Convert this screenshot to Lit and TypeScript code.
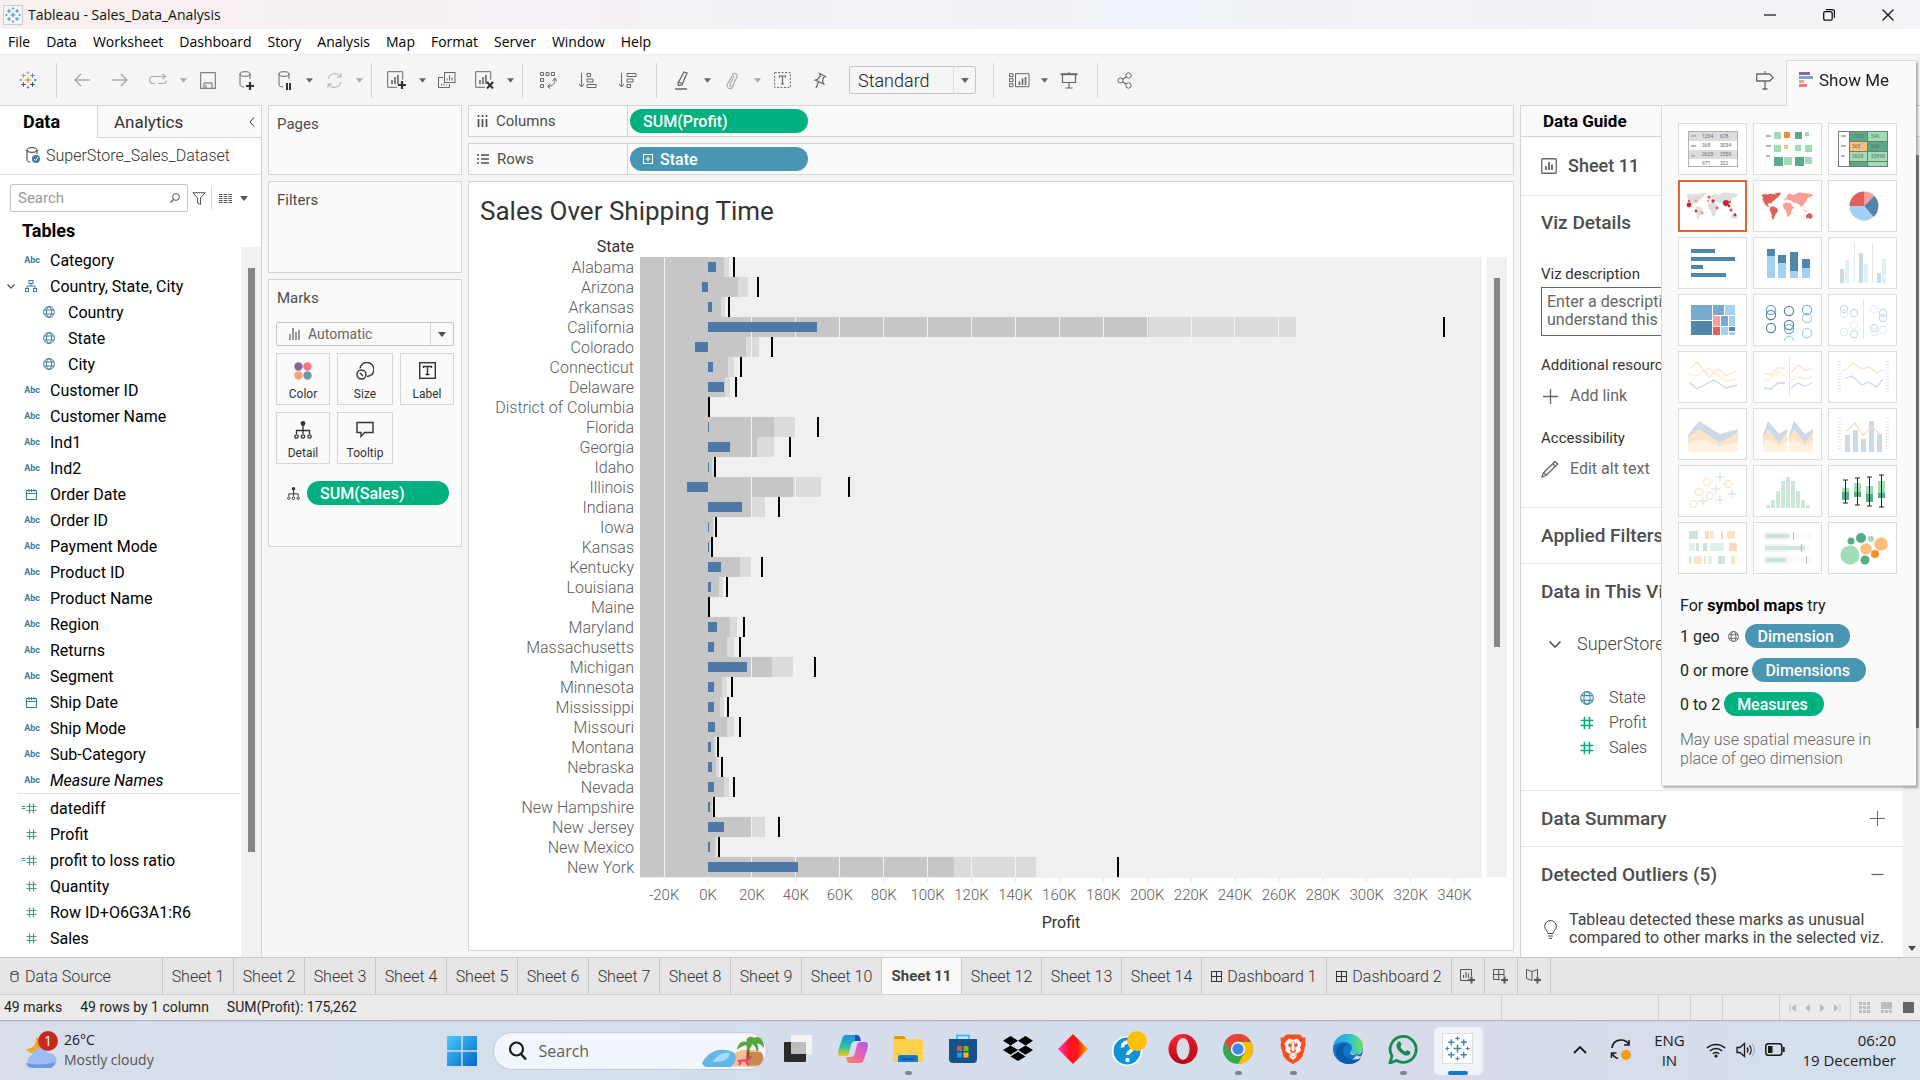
import { LitElement, html, svg, css, nothing } from "lit";
import type { TemplateResult } from "lit";
import { customElement, property } from "lit/decorators.js";
import { classMap } from "lit/directives/class-map.js";

type Svg = TemplateResult | unknown;

const icon = (w: number, h: number, body: Svg, cls = "ic") =>
  html`<svg class=${cls} width=${w} height=${h} viewBox="0 0 ${w} ${h}" fill="none" stroke="currentColor" aria-hidden="true">${body}</svg>`;

/* ---------- shared glyphs ---------- */

const caret = () => icon(8, 5, svg`<path d="M0 0h8l-4 5z" fill="currentColor" stroke="none"/>`);
const globe = (s = 12) =>
  html`<svg class="ic" width=${s} height=${s} viewBox="0 0 12 12" fill="none" stroke="currentColor" aria-hidden="true">
    <circle cx="6" cy="6" r="5.4"/><ellipse cx="6" cy="6" rx="2.6" ry="5.4"/><path d="M1 4h10M1 8h10"/></svg>`;
const hash = (s = 11) =>
  html`<svg class="ic" width=${s} height=${s} viewBox="0 0 11 11" fill="none" stroke="currentColor" stroke-width="1.2" aria-hidden="true">
    <path d="M3.5 0.5v10M7.5 0.5v10M0.5 3.5h10M0.5 7.5h10"/></svg>`;
const calcHash = () => html`<span class="calc">=</span>${hash()}`;
const hierarchy = () =>
  icon(12, 12, svg`<rect x="4" y="0.5" width="4" height="3"/><rect x="0.5" y="8.5" width="3" height="3"/><rect x="8.5" y="8.5" width="3" height="3"/><path d="M6 4v2M2 8V6h8v2"/>`);
const calendar = () => icon(11, 11, svg`<rect x="0.5" y="1.5" width="10" height="9"/><path d="M0.5 4.5h10M3 0v3M5.500 0v3M8 0v3"/>`);
const detailGlyph = (s: number) =>
  html`<svg class="ic" width=${s} height=${s} viewBox="0 0 18 18" fill="none" stroke="currentColor" stroke-width="1.3" aria-hidden="true">
    <circle cx="9" cy="2.500" r="2.400" fill="currentColor" stroke="none"/><path d="M9 4v9M2.500 13V9.500h13V13"/>
    <circle cx="2.500" cy="15.500" r="1.700"/><circle cx="9" cy="15.500" r="1.700"/><circle cx="15.500" cy="15.500" r="1.700"/></svg>`;
const plusBox = () => icon(10, 10, svg`<rect x="0.5" y="0.5" width="9" height="9"/><path d="M5 2.500v5M2.500 5h5"/>`);
const sheetGlyph = () => icon(16, 16, svg`<rect x="0.75" y="0.75" width="14.500" height="14.500" rx="1" stroke-width="1.3"/><path d="M5 12V8M8 12V4M11 12V6.500" stroke-width="1.800"/>`);
const dashGlyph = () => icon(11, 11, svg`<rect x="0.5" y="0.5" width="10" height="10"/><path d="M5.500 0.5v10M0.500 5.500h10"/>`);

const mark = (x: number, y: number, r: number, c: string, w: number) =>
  svg`<path d="M${x - r} ${y}h${2 * r}M${x} ${y - r}v${2 * r}" stroke=${c} stroke-width=${w}/>`;
const tableauMark = (size: number, mono = false) => {
  const c = (v: string) => (mono ? "#3f86b4" : v);
  return html`<svg class="ic" width=${size} height=${size} viewBox="0 0 32 32" aria-hidden="true">
    ${mark(16, 16, 5, c("#e8762c"), 2)}
    ${mark(8, 8, 4, c("#eb9129"), 1.8)}${mark(24, 8, 4, c("#59879b"), 1.8)}
    ${mark(8, 24, 4, c("#c72035"), 1.8)}${mark(24, 24, 4, c("#1f447e"), 1.8)}
    ${mark(16, 3, 2.6, c("#7099a6"), 1.4)}${mark(16, 29, 2.6, c("#5b6591"), 1.4)}
    ${mark(3, 16, 2.6, c("#7099a6"), 1.4)}${mark(29, 16, 2.6, c("#5b6591"), 1.4)}
  </svg>`;
};

/* ---------- toolbar glyphs ---------- */

const bars = svg`<path d="M5 13V9M8 13V6M11 13V4" stroke-width="1.6"/>`;
const T = {
  back: icon(16, 14, svg`<path d="M16 7H1M7 1L1 7l6 6" stroke-width="1.4"/>`),
  fwd: icon(16, 14, svg`<path d="M0 7h15M9 1l6 6-6 6" stroke-width="1.4"/>`),
  redo: icon(18, 12, svg`<path d="M6 9.500H4a3.500 3.500 0 010-7h12.500M13.500 0l3 2.500-3 2.500M9 9.500h5a3.500 3.500 0 003.300-3" stroke-width="1.2"/>`),
  save: icon(16, 17, svg`<rect x="0.700" y="0.700" width="14.600" height="15.600"/><path d="M4 16v-5h8v5M6 16v-3"/>`),
  dbAdd: icon(15, 19, svg`<ellipse cx="6" cy="3" rx="5" ry="2.300"/><path d="M1 3v11c0 1 2 2 4 2M11 3v5"/><path d="M11 11v8M7 15h8" stroke-width="2.200" stroke="#333"/>`),
  dbPause: icon(13, 19, svg`<ellipse cx="6" cy="3" rx="5" ry="2.300"/><path d="M1 3v11c0 1 2 2 4 2M11 3v5"/><path d="M9 12v7M12 12v7" stroke-width="2" stroke="#333"/>`),
  refresh: icon(17, 17, svg`<path d="M2 7a7 7 0 0112.500-2.500M15 10a7 7 0 01-12.500 2.500M15 1v4h-4M2 16v-4h4"/>`),
  newSheet: icon(20, 18, svg`<path d="M10 16.300H0.700V0.700h15v8"/>${bars}<path d="M15 10v8M11 14h8" stroke-width="2.200" stroke="#333"/>`),
  dup: icon(18, 16, svg`<rect x="6.500" y="0.500" width="10.500" height="10"/><path d="M5 5.500H0.500v10h11v-3.500M9 8.500v-2M11.500 8.500v-5M14 8.500v-3M3.500 13.500v-2M6 13.500v-2M8.500 13.500v-1"/>`),
  clear: icon(20, 18, svg`<path d="M10 16.300H0.700V0.700h15v8"/>${bars}<path d="M12 11l6 6.500M18 11l-6 6.500" stroke-width="2" stroke="#333"/>`),
  swap: icon(17, 18, svg`<path d="M0.500 1.500h3v3h-3zM6 1.500h3v3h-3zM11.500 1.500h3v3h-3zM0.500 7.500h3v3h-3zM0.500 13.500h3v3h-3zM15 8c0 5-2 7-7 7.500M12.500 10L15 7l2 3M10.500 12.500L7.500 15.500l3 2.300"/>`),
  asc: icon(18, 17, svg`<path d="M2.500 1v13M0 12l2.500 3L5 12" /><path d="M8 1.500h3.500v3H8zM8 7h6v3H8zM8 12.500h9v3H8z"/>`),
  desc: icon(18, 17, svg`<path d="M2.500 1v13M0 12l2.500 3L5 12" /><path d="M8 1.500h9v3H8zM8 7h6v3H8zM8 12.500h3.500v3H8z"/>`),
  pen: icon(14, 19, svg`<path d="M9 1l3 1-5 12-3.500 0.500L3 12zM4 11l3 1.500M0 18h12" stroke-width="1.3"/>`),
  clip: icon(14, 17, svg`<path d="M9 4L5 12.500a1.500 1.500 0 003 1l4-9a2.300 2.300 0 00-4.500-1.500L2.500 12a3 3 0 005.500 3" stroke-width="1.2"/>`),
  text: icon(17, 16, svg`<rect x="0.600" y="0.600" width="15.800" height="14.800" stroke-dasharray="2 1.500"/><path d="M5.500 5.500V4h6v1.500M8.500 4v8M7 12h3" stroke-width="1.200"/>`),
  pin: icon(14, 17, svg`<path d="M6.500 1.500l6 3-2 1-1 4 1.200 2.500-8.500-4 2.500-0.800 2.600-3.200zM5.500 10L3 16" stroke-width="1.2"/>`),
  cards: icon(21, 15, svg`<path d="M0.500 0.700h3.500v3H0.500zM0.500 5.700h3.500v3H0.500zM0.500 10.700h3.500v3H0.500zM6.500 0.700h13.500v13h-13.500z"/><path d="M10.500 12V8.500M13.500 12V5.500M16.500 12V4" stroke-width="1.600"/>`),
  present: icon(18, 17, svg`<path d="M0.500 2.200h17" stroke-width="2"/><path d="M2.500 3v7.500h13V3M9 0v2M9 11v5M5.500 16h7" stroke-width="1.200"/>`),
  share: icon(16, 17, svg`<circle cx="3.500" cy="8.500" r="2.500"/><circle cx="11.500" cy="3.500" r="2.700"/><circle cx="11.500" cy="13.500" r="2.700"/><path d="M5.700 7.200l3.500-2.200M5.700 9.800l3.500 2.200" stroke-width="1.300"/>`),
  sign: icon(18, 19, svg`<path d="M0.700 3h13l3.500 3.500-3.500 3.500H0.700zM9 0v3M9 10v8M6.500 18h5" stroke-width="1.300"/>`),
  showMe: html`<svg class="ic" width="14" height="16" viewBox="0 0 14 16" aria-hidden="true"><path fill="#87679b" d="M0 0h11v3H0z"/><path fill="#7ba3cf" d="M0 4h14v3H0z"/><path fill="#f5a475" d="M0 8h5v3H0z"/><path fill="#fb7185" d="M0 12h8v3H0z"/></svg>`,
};

/* ---------- Show Me thumbnails ---------- */

const G1 = "#59ab87", G2 = "#a0dcb6", O1 = "#f28e2b", O2 = "#ffbe7d", B1 = "#5085ad", B2 = "#7aa9cf", B3 = "#a6d0f0", R1 = "#e15f57", R2 = "#ff9d9a";
const fB = "#ccdae8", fB2 = "#e0effb", fO = "#fde3c8", fO2 = "#fef2e2", fG = "#cce6da", fG2 = "#dff2e6", fP = "#fbdcc0";
const r = (x: number, y: number, x2: number, y2: number, c: string) => svg`<rect x=${x} y=${y} width=${x2 - x} height=${y2 - y} fill=${c}/>`;
const ring = (x: number, y: number, c: string, rad = 4.6, w = 1.2) => svg`<circle cx=${x} cy=${y} r=${rad} fill="none" stroke=${c} stroke-width=${w}/>`;
const dot = (x: number, y: number, rad: number, c: string) => svg`<circle cx=${x} cy=${y} r=${rad} fill=${c}/>`;
const line = (pts: string, c: string) => svg`<polyline points=${pts} fill="none" stroke=${c} stroke-width="1.300"/>`;
const area = (pts: string, c: string) => svg`<polygon points=${pts} fill=${c}/>`;
const num = (x: number, y: number, t: string) => svg`<text class="num" x=${x} y=${y}>${t}</text>`;
const dashes = svg`${r(13, 12, 18, 14, "#b5b5b5")}${r(13, 22, 18, 24, "#b5b5b5")}${r(13, 32, 17, 34, "#b5b5b5")}`;
const ticks = svg`<path d="M11.500 10v33M59.500 10v33" stroke="#e6e6e6" stroke-width="3" stroke-dasharray="1 2"/>`;

const NA = "M9 15l2-1 4 0.500 3-1 2 1 1-1 2 2 2 2-2 1-2 2-2 1.500-0.500 1.500-2-0.500-2 1 1 2 2 1.500-2-0.500-3-2-2-3.500-1-2.500 0.500-2-2-1.500z";
const GREEN = "M22 13l5-0.500 1 1-2 2.500-2 1.500-1-2z";
const SA = "M18 26.500l3 0 4 2.500-0.500 3-2.500 3-1 3-0.500 2-1.500-1.500-0.500-5-2-3.500z";
const EUR = "M31 21l0.500-2 2-1 0.500-2.500 2-2 2 0.500 1 1 3-0.500 2-1.500 3-0.500 4 0.500 5 0.500 4 1-0.500 1.500-2 0.500-0.500 2-1.500-1.500-1.500 2-1 3-2 1.500-0.500 3-1.500-1.500-1 2.500-2-3.500-2 0-1-1.500-2 0.500-3-2.500-2 0-2-1.500z";
const AFR = "M30 24l2.500-1.500 5 0.500 2 3.500 2 0.500-3 3.500-0.500 3-2.500 3.500-1.500-1-1-5.500-2.500-2z";
const AUS = "M53 35l3-2 2 0.500 1.500 2 0 2-2 1.500-2-1-2.500 0.500z";
const lands = (a: string, b: string) => svg`
  <path d=${NA + GREEN + SA + AUS} fill=${a}/><path d=${EUR + AFR} fill=${b}/><path d="M50 29l3 1.500 2 1.500-3-0.500z" fill=${b}/>`;

const box = (x: number, t: number, m: number, b: number, w1: number, w2: number) => svg`
  ${r(x, t, x + 7, m, G2)}${r(x, m, x + 7, b, G1)}
  <path d="M${x + 3.5} ${w1}V${w2}M${x + 1} ${w1}h5M${x + 1} ${w2}h5" stroke="#222" stroke-width="1"/>`;

const THUMBS: [string, Svg][] = [
  ["Text table", svg`${r(10, 8, 60, 44, "#fff")}${r(10, 8, 60, 18, "#dcdcdc")}${r(10, 27, 60, 36, "#dcdcdc")}<rect x="10.500" y="8.500" width="49" height="35" fill="none" stroke="#b0b0b0"/>${dashes}
    ${num(24, 15, "1234")}${num(42, 15, "678")}${num(24, 24, "368")}${num(42, 24, "3034")}${num(24, 33, "2620")}${num(42, 33, "2559")}${num(24, 42, "971")}${num(42, 42, "322")}`],
  ["Heat map", svg`${dashes}${r(21, 9, 28, 16, G2)}${r(31, 9, 37, 15, O1)}${r(42, 9, 49, 16, G1)}${r(52, 9, 56, 13, G2)}
    ${r(21, 22, 28, 29, G2)}${r(31, 22, 35, 26, O2)}${r(42, 22, 48, 28, G2)}${r(52, 22, 59, 29, G2)}
    ${r(21, 34, 30, 43, G1)}${r(31, 34, 39, 42, G2)}${r(42, 34, 51, 43, G1)}${r(52, 34, 59, 41, G2)}`],
  ["Highlight table", svg`${r(10, 8, 60, 44, "#777")}${r(11, 9, 21, 43, "#fff")}${r(22, 9, 39, 18, G1)}${r(40, 9, 59, 18, G2)}${r(22, 19, 39, 28, O2)}${r(40, 19, 59, 28, G1)}
    ${r(22, 29, 39, 38, G2)}${r(40, 29, 59, 38, G2)}${r(22, 39, 39, 43, G1)}${r(40, 39, 59, 43, G2)}${dashes}
    ${num(24, 15, "1234")}${num(43, 15, "546")}${num(24, 25, "368")}${num(43, 25, "340")}${num(24, 35, "2620")}${num(43, 35, "53890")}`],
  ["Symbol map", svg`${lands("#dedede", "#dedede")}${dot(11, 25, 2.4, "#c0283a")}${dot(11, 21, 1.2, "#e15759")}${dot(18, 21, 1.6, R2)}${dot(18, 31, 1.3, "#c0283a")}${dot(24, 33, 1.8, R2)}
    ${dot(31, 17, 1.6, "#e15759")}${dot(30, 21, 1.2, R2)}${dot(35, 21, 1.7, "#c0283a")}${dot(39, 28, 1.4, "#e15759")}${dot(48, 23, 3, "#c0283a")}${dot(51, 26, 1.4, "#c0283a")}${dot(52, 22, 1.2, "#e15759")}${dot(53, 30, 1.6, "#e15759")}${dot(57, 35, 1.4, "#c0283a")}`],
  ["Map", lands(R1, R2)],
  ["Pie chart", svg`<path d="M36 26V11.500A14.500 14.500 0 0146.200 15.700z" fill=${R2}/><path d="M36 26L46.200 15.700A14.500 14.500 0 0145.300 37.100z" fill=${B1}/>
    <path d="M36 26L45.300 37.100A14.500 14.500 0 0121.500 26z" fill=${B3}/><path d="M36 26H21.500A14.500 14.500 0 0136 11.500z" fill=${R1}/>`],
  ["Horizontal bars", svg`${r(13, 12, 37, 16, B1)}${r(13, 20, 57, 24, B1)}${r(13, 28, 25, 32, B1)}${r(13, 36, 48, 40, B1)}`],
  ["Stacked bars", svg`${r(14, 12, 22, 19, B1)}${r(14, 19, 22, 41, B3)}${r(25, 18, 33, 26, B1)}${r(25, 26, 33, 41, B3)}${r(37, 15, 45, 34, B1)}${r(37, 34, 45, 41, B3)}${r(49, 22, 57, 31, B1)}${r(49, 31, 57, 41, B3)}`],
  ["Side-by-side bars", svg`${r(12, 32, 16, 46, fB)}${r(17, 23, 21, 46, fB2)}${r(26, 6, 27, 46, "#e6e6e6")}${r(31, 16, 35, 46, fB)}${r(36, 27, 40, 46, fB2)}${r(44, 6, 45, 46, "#e6e6e6")}${r(49, 36, 53, 46, fB)}${r(54, 22, 58, 46, fB2)}`],
  ["Treemap", svg`${r(13, 11, 34, 26, B2)}${r(13, 27, 34, 41, B1)}${r(35, 11, 46, 21, B2)}${r(47, 11, 57, 21, B3)}${r(35, 22, 42, 32, R2)}${r(43, 22, 50, 32, B2)}${r(51, 22, 57, 32, B3)}${r(35, 33, 42, 41, R1)}${r(43, 33, 50, 41, B3)}${r(51, 33, 57, 37, B1)}${r(51, 38, 57, 41, B3)}`],
  ["Circle views", svg`${ring(18, 16, B2)}${ring(18, 21, B1)}${ring(18, 34, B1)}${ring(36, 17, B1)}${ring(36, 31, B1)}${ring(36, 35, B2)}<path d="M31.400 47a4.600 4.600 0 019.200 0" fill="none" stroke=${B3} stroke-width="1.200"/>${ring(54, 16, B2)}${ring(54, 24, B3)}${ring(54, 39, B3)}`],
  ["Side-by-side circles", svg`${ring(16, 15, fB, 3.6)}${ring(16, 20, fB2, 3.6)}${ring(26, 19, fB, 3.6)}${ring(16, 38, fB2, 3.6)}${ring(26, 31, fB2, 3.6)}${ring(26, 40, fB, 3.6)}${r(35, 6, 36, 46, "#e0e6ec")}
    ${ring(46, 15, fB2, 3.6)}${ring(55, 19, fB, 3.6)}${ring(55, 24, fB, 3.6)}${ring(46, 34, fB, 3.6)}${ring(46, 38, fB2, 3.6)}${ring(55, 36, fB2, 3.6)}`],
  ["Lines (continuous)", svg`${line("11,23 18,25 31,17 48,30 59,28", "#fdecc8")}${line("13,17 19,11 31,26 41,18 48,25 59,19", fO)}${line("11,31 19,38 36,29 48,37 59,34", fB)}`],
  ["Lines (discrete)", svg`${r(36, 6, 37, 46, "#e6e6e6")}${line("11,22 18,24 25,17 32,17", fO)}${line("11,29 18,27 25,21 32,25", "#fdecc8")}${line("11,37 18,38 25,32 32,32", fB)}${line("38,22 45,14 52,19 59,18", fO)}${line("38,29 45,26 52,28 59,26", "#fdecc8")}${line("38,37 45,32 52,35 59,32", fB)}`],
  ["Dual lines", svg`${ticks}${line("16,20 25,12 34,18 41,16 49,22 55,18", fO)}${line("16,28 24,25 34,34 40,31 49,36 55,28", fB)}`],
  ["Area (continuous)", svg`${area("10,27 21,13 42,26 60,21 60,44 10,44", fB)}${area("10,29 21,21 42,35 60,24 60,44 10,44", fO)}${area("10,35 21,31 42,38 60,34 60,44 10,44", fO2)}`],
  ["Area (discrete)", svg`${[0, 26].map((d) => svg`<g transform="translate(${d} 0)">${area("10,27 15,13 26,26 34,21 34,44 10,44", fB)}${area("10,30 15,21 26,35 34,24 34,44 10,44", fO)}${area("10,35 15,31 26,38 34,34 34,44 10,44", fO2)}</g>`)}`],
  ["Dual combination", svg`${ticks}${r(17, 27, 22, 44, fB)}${r(25, 22, 30, 44, fB)}${r(33, 31, 38, 44, fB)}${r(41, 13, 46, 44, fB)}${r(49, 26, 54, 44, fB)}${line("18,23 27,15 35,27 44,19 53,27", "#fbdcc0")}`],
  ["Scatter plot", svg`${[[15, 39], [21, 27], [29, 17], [32, 31], [50, 19]].map(([x, y]) => ring(x, y, fO, 3.6))}${[[25, 36], [38, 24], [42, 12], [42, 35], [54, 29]].map(([x, y]) => mark(x, y, 4.5, fG, 1))}`],
  ["Histogram", svg`${[40, 35, 26, 16, 12, 16, 26, 35, 40].map((t, i) => r(13 + i * 5, t, 17 + i * 5, 43, fG))}`],
  ["Box-and-whisker plot", svg`${box(14, 23, 27, 35, 15, 38)}${box(26, 18, 27, 32, 13, 40)}${box(38, 21, 29, 37, 12, 41)}${box(50, 16, 28, 33, 10, 42)}`],
  ["Gantt chart", svg`${r(11, 9, 20, 17, fG)}${r(27, 9, 31, 17, fP)}${r(32, 9, 36, 17, fO)}${r(43, 9, 45, 17, fP)}${r(49, 9, 57, 17, fO)}
    ${r(11, 21, 17, 29, fG2)}${r(18, 21, 21, 29, fG)}${r(25, 21, 29, 29, fG)}${r(32, 21, 46, 29, fG2)}${r(51, 21, 59, 29, fP)}
    ${r(11, 34, 13, 42, fG)}${r(16, 34, 24, 42, fO)}${r(26, 34, 28, 42, fP)}${r(30, 34, 34, 42, fG2)}${r(40, 34, 47, 42, fG)}${r(53, 34, 57, 42, fO)}`],
  ["Bullet graph", svg`${[[10, 37, 40], [22, 52, 48], [34, 33, 53]].map(([y, w, m]) => svg`${r(12, y, 58, y + 8, "#fafafa")}${r(12, y, 36, y + 8, "#f3f3f3")}${r(12, y + 2, w, y + 6, fG)}${r(m, y, m + 1, y + 8, "#bbb")}`)}`],
  ["Packed bubbles", svg`${dot(22, 33, 9.5, G2)}${dot(23, 19, 3.5, G1)}${dot(33, 16, 5, G1)}${dot(43, 17, 3, G2)}${dot(53, 22, 6.8, O2)}${dot(38, 27, 5.8, O2)}${dot(47, 32, 4, O1)}${dot(37, 38, 4.5, G1)}`],
];

/* ---------- data ---------- */

type Kind = "abc" | "date" | "geo" | "tree" | "num" | "calc";
interface Field { name: string; kind: Kind; child?: boolean; italic?: boolean }

const DIMENSIONS: Field[] = [
  { name: "Category", kind: "abc" },
  { name: "Country, State, City", kind: "tree" },
  { name: "Country", kind: "geo", child: true },
  { name: "State", kind: "geo", child: true },
  { name: "City", kind: "geo", child: true },
  { name: "Customer ID", kind: "abc" },
  { name: "Customer Name", kind: "abc" },
  { name: "Ind1", kind: "abc" },
  { name: "Ind2", kind: "abc" },
  { name: "Order Date", kind: "date" },
  { name: "Order ID", kind: "abc" },
  { name: "Payment Mode", kind: "abc" },
  { name: "Product ID", kind: "abc" },
  { name: "Product Name", kind: "abc" },
  { name: "Region", kind: "abc" },
  { name: "Returns", kind: "abc" },
  { name: "Segment", kind: "abc" },
  { name: "Ship Date", kind: "date" },
  { name: "Ship Mode", kind: "abc" },
  { name: "Sub-Category", kind: "abc" },
  { name: "Measure Names", kind: "abc", italic: true },
];
const MEASURES: Field[] = [
  { name: "datediff", kind: "calc" },
  { name: "Profit", kind: "num" },
  { name: "profit to loss ratio", kind: "calc" },
  { name: "Quantity", kind: "num" },
  { name: "Row ID+O6G3A1:R6", kind: "num" },
  { name: "Sales", kind: "num" },
];

/* State, profit and sales, both in thousands. */
const STATES: [string, number, number][] = [
  ["Alabama", 3.6, 11.8], ["Arizona", -2.7, 22.7], ["Arkansas", 1.8, 9.5], ["California", 49.5, 335], ["Colorado", -5.9, 29.1],
  ["Connecticut", 2.3, 15], ["Delaware", 7.3, 12.7], ["District of Columbia", 0, 0.5], ["Florida", 0.45, 50], ["Georgia", 10, 37.3],
  ["Idaho", 0.45, 3.2], ["Illinois", -9.5, 64.1], ["Indiana", 15.5, 32.3], ["Iowa", 0.45, 3.6], ["Kansas", 0.45, 1.8],
  ["Kentucky", 5.9, 24.5], ["Louisiana", 1.4, 8.6], ["Maine", 0, 0.5], ["Maryland", 4.1, 16.4], ["Massachusetts", 2.7, 14.5],
  ["Michigan", 17.7, 48.6], ["Minnesota", 2.7, 10.9], ["Mississippi", 2.7, 9.1], ["Missouri", 3.2, 14.5], ["Montana", 1.4, 4.5],
  ["Nebraska", 1.8, 6.4], ["Nevada", 2.7, 11.8], ["New Hampshire", 0.9, 2.7], ["New Jersey", 7.3, 32.3], ["New Mexico", 0.9, 5],
  ["New York", 40.9, 186.6],
];

const DOMAIN_MIN = -31;
const DOMAIN_SPAN = 383.5;
const ROW = 20;
const pct = (k: number) => `${(((k - DOMAIN_MIN) / DOMAIN_SPAN) * 100).toFixed(3)}%`;
const span = (k: number) => `${((k / DOMAIN_SPAN) * 100).toFixed(3)}%`;
const TICKS = Array.from({ length: 19 }, (_, i) => -20 + i * 20);

const base = css`
  :host { box-sizing: border-box; }
  *, *::before, *::after { box-sizing: border-box; }
  button { font: inherit; color: inherit; background: none; border: 0; padding: 0; margin: 0; display: flex; align-items: center; justify-content: center; }
  h1, h2, h3, p, ul, ol { margin: 0; padding: 0; font-weight: 400; font-size: inherit; }
  ul, ol { list-style: none; }
  a { color: inherit; text-decoration: none; }
  .ic { display: block; flex: none; }
  .pill { display: flex; align-items: center; height: 24px; border-radius: 12px; color: #fff; background: #00b180; padding: 0 13px; font-size: 16px; font-weight: 500; }
  .pill.blue { background: #4996b2; }
`;

/* ---------- chart ---------- */

@customElement("profit-chart")
export class ProfitChart extends LitElement {
  static styles = [base, css`
    :host { display: grid; grid-template-columns: 171px minmax(0, 1fr) 25px; color: #5c5c5c; font-size: 15px; }
    .head { height: 20px; line-height: 20px; text-align: right; padding-right: 6px; color: #333; grid-column: 1; font-size: 16px; }
    .states { grid-column: 1; grid-row: 2; padding-right: 6px; text-align: right; font-size: 16px; font-weight: 300; }
    .states li { height: 20px; line-height: 22px; }
    .plot { grid-column: 2; grid-row: 2; display: block; width: 100%; height: 620px; background: #f0f0f0; shape-rendering: crispEdges; }
    .track { grid-column: 3; grid-row: 2; margin-left: 5px; background: #f0f0f0; padding: 21px 7px 0; }
    .thumb { height: 369px; background: #858585; }
    .axis { grid-column: 2; grid-row: 3; display: block; width: 100%; height: 32px; overflow: visible; }
    .axis text { text-anchor: middle; fill: #5c5c5c; font-size: 15px; font-weight: 300; }
    .title { grid-column: 2; grid-row: 4; text-align: center; line-height: 28px; color: #333; font-size: 16px; }
  `];

  private row([, , sales]: [string, number, number], i: number) {
    const y = i * ROW;
    return svg`
      <rect x="0" y=${y} width=${pct(sales * 0.8)} height=${ROW} fill="#dbdbdb"/>
      <rect x="0" y=${y} width=${pct(sales * 0.6)} height=${ROW} fill="#c6c6c6"/>`;
  }

  render() {
    const h = STATES.length * ROW;
    return html`
      <div class="head">State</div>
      <ul class="states">${STATES.map(([n]) => html`<li>${n}</li>`)}</ul>
      <svg class="plot" role="img" aria-label="Profit by state">
        ${STATES.map((s, i) => this.row(s, i))}
        ${TICKS.map((t) => svg`<line x1=${pct(t)} x2=${pct(t)} y1="0" y2=${h} stroke=${t ? "#f2f2f2" : "#d4d4d4"} stroke-dasharray=${t ? nothing : "1 2"}/>`)}
        ${STATES.map(([, p, s], i) => svg`
          <rect x=${pct(Math.min(p, 0))} y=${i * ROW + 5} width=${span(Math.abs(p))} height="10" fill="#4e79a7"/>
          <line x1=${pct(s)} x2=${pct(s)} y1=${i * ROW} y2=${(i + 1) * ROW} stroke="#000" stroke-width="2"/>`)}
      </svg>
      <div class="track"><div class="thumb"></div></div>
      <svg class="axis">
        <line x1="0" x2="100%" y1="0.5" y2="0.5" stroke="#f0f0f0"/>
        ${TICKS.map((t) => svg`<line x1=${pct(t)} x2=${pct(t)} y1="0" y2="5" stroke="#e6e6e6"/><text x=${pct(t)} y="23">${t}K</text>`)}
      </svg>
      <div class="title">Profit</div>`;
  }
}

/* ---------- data pane ---------- */

@customElement("data-pane")
export class DataPane extends LitElement {
  static styles = [base, css`
    :host { display: flex; flex-direction: column; width: 262px; flex: none; background: #fff; border-right: 1px solid #d4d4d4; font-size: 16px; color: #222; min-height: 0; }
    .tabs { display: flex; height: 33px; flex: none; border-top: 1px solid #d4d4d4; font-size: 18px; }
    .tab { width: 97px; color: #000; font-weight: 700; padding: 0 14px 2px 0; }
    .tab.off { flex: 1; justify-content: space-between; padding: 0 6px 0 16px; font-size: 17px; font-weight: 400; color: #333; background: #fafafa; border-left: 1px solid #d4d4d4; border-bottom: 1px solid #d4d4d4; }
    .source { display: flex; align-items: center; gap: 6px; height: 37px; flex: none; padding: 0 0 2px 26px; border-bottom: 1px solid #e0e0e0; color: #333; font-size: 16px; font-weight: 300; }
    .tools { display: flex; align-items: center; height: 46px; flex: none; padding: 0 10px; color: #555; }
    .search { display: flex; align-items: center; width: 178px; height: 28px; border: 1px solid #c4c4c4; border-radius: 2px; padding: 0 7px; background: #fff; }
    .search input { flex: 1; min-width: 0; border: 0; outline: 0; padding: 0; font: inherit; font-size: 15px; background: none; }
    .search input::placeholder { color: #999; opacity: 1; }
    .filter { margin-left: 4px; }
    .view { gap: 8px; height: 22px; margin-left: 5px; padding-left: 7px; border-left: 1px solid #d4d4d4; }
    h2 { height: 26px; line-height: 20px; padding-left: 22px; font-size: 18px; font-weight: 700; color: #000; flex: none; }
    .list { display: flex; flex: 1; min-height: 0; overflow: hidden; }
    .fields { flex: 1; min-width: 0; color: #000; font-weight: 300; }
    .fields li { display: flex; align-items: center; height: 26px; }
    .fields li.child .k { width: 68px; padding-left: 43px; justify-content: flex-start; }
    .fields .italic { font-style: italic; }
    .k { display: flex; align-items: center; justify-content: flex-end; width: 50px; padding-right: 13px; color: #3b7f9b; flex: none; }
    .abc .k { padding-right: 10px; font-size: 9px; font-weight: 700; }
    .num .k, .calc-row .k { color: #3aa67c; }
    .tree .k { gap: 10px; }
    .tree .k .ic:first-child { color: #555; }
    .calc { font-size: 9px; line-height: 9px; font-weight: 700; }
    .rule { height: 1px; margin: 0 1px 1px 18px; background: #dcdcdc; }
    .track { width: 20px; background: #f0f0f0; padding: 21px 6px 0 7px; }
    .thumb { height: 584px; background: #858585; }
  `];

  private glyph(k: Kind) {
    switch (k) {
      case "abc": return "Abc";
      case "date": return calendar();
      case "geo": return globe();
      case "tree": return html`${icon(8, 5, svg`<path d="M0.500 0.500L4 4l3.500-3.500" stroke-width="1.300"/>`)}${hierarchy()}`;
      case "calc": return calcHash();
      default: return hash();
    }
  }
  private field(f: Field) {
    return html`<li class=${classMap({ child: !!f.child, abc: f.kind === "abc", tree: f.kind === "tree", num: f.kind === "num", "calc-row": f.kind === "calc" })}>
      <span class="k">${this.glyph(f.kind)}</span><span class=${classMap({ italic: !!f.italic })}>${f.name}</span></li>`;
  }
  render() {
    return html`
      <div class="tabs"><button class="tab">Data</button><button class="tab off">Analytics ${icon(6, 10, svg`<path d="M5 0.500L1 5l4 4.500"/>`)}</button></div>
      <div class="source">${icon(14, 16, svg`<ellipse cx="6" cy="3" rx="5" ry="2.300"/><path d="M1 3v10c0 1 1 2 3 2M11 3v4"/><circle cx="10" cy="12" r="4" fill="#3b82ab" stroke="none"/><path d="M8 12l1.500 1.500L12 10.500" stroke="#fff"/>`)}<span>SuperStore_Sales_Dataset</span></div>
      <div class="tools">
        <label class="search"><input type="text" placeholder="Search" aria-label="Search" />${icon(10, 10, svg`<circle cx="6" cy="4" r="3.400"/><path d="M3.500 6.500L0.500 9.500" stroke-width="1.300"/>`)}</label>
        <button class="filter" aria-label="Filter">${icon(14, 13, svg`<path d="M1 0.700h12L8.500 6v6.500L5.500 11V6z"/>`)}</button>
        <button class="view" aria-label="View">${icon(13, 11, svg`<path d="M0 1.500h13M0 3.500h13M0 5.500h13M0 7.500h13M0 9.500h13" stroke-dasharray="3.500 1.200"/>`)}${caret()}</button>
      </div>
      <h2>Tables</h2>
      <div class="list">
        <div class="fields">
          <ul>${DIMENSIONS.map((f) => this.field(f))}</ul>
          <div class="rule"></div>
          <ul>${MEASURES.map((f) => this.field(f))}</ul>
        </div>
        <div class="track"><div class="thumb"></div></div>
      </div>`;
  }
}

/* ---------- cards ---------- */

@customElement("cards-pane")
export class CardsPane extends LitElement {
  static styles = [base, css`
    :host { display: flex; flex-direction: column; gap: 6px; width: 206px; flex: none; padding: 0 6px; font-size: 15px; color: #4d4d4d; }
    .card { border: 1px solid #d4d4d4; background: #fafafa; padding: 8px 7px 0; height: 92px; }
    .card.pages { height: 70px; }
    .card.marks { height: 268px; }
    h2 { line-height: 20px; padding-left: 1px; }
    .sel { display: grid; grid-template-columns: 1fr 23px; margin-top: 14px; height: 24px; border: 1px solid #c4c4c4; border-radius: 2px; align-items: center; font-size: 14px; }
    .sel > .glyph { grid-area: 1 / 1; padding-left: 12px; pointer-events: none; color: #333; }
    .sel select { grid-area: 1 / 1 / 2 / 3; appearance: none; border: 0; background: none; font: inherit; color: #666; height: 22px; padding: 0 0 0 31px; margin: 0; }
    .sel > .arrow { grid-area: 1 / 2; display: flex; height: 22px; align-items: center; justify-content: center; border-left: 1px solid #d4d4d4; pointer-events: none; }
    .grid { display: grid; grid-template-columns: 54px 56px 54px; gap: 7px; margin-top: 7px; }
    .grid button { flex-direction: column; justify-content: space-between; height: 52px; border: 1px solid #d4d4d4; padding: 8px 0 2px; font-size: 12px; line-height: 16px; color: #333; }
    .row { display: flex; align-items: center; gap: 7px; margin: 17px 5px 0 11px; color: #333; }
    .row .pill { flex: 1; }
  `];
  render() {
    return html`
      <section class="card pages"><h2>Pages</h2></section>
      <section class="card"><h2>Filters</h2></section>
      <section class="card marks">
        <h2>Marks</h2>
        <div class="sel">
          <select aria-label="Mark type"><option>Automatic</option></select>
          <span class="glyph">${icon(11, 12, svg`<path d="M1 12V6M4 12V0M7 12V4M10 12V2"/>`)}</span>
          <span class="arrow">${caret()}</span>
        </div>
        <div class="grid">
          <button>${icon(18, 18, svg`<g stroke="none"><circle cx="4.500" cy="4.500" r="4.200" fill="#87679b"/><circle cx="13.500" cy="4.500" r="4.200" fill="#fb7185"/><circle cx="4.500" cy="13.500" r="4.200" fill="#f5a475"/><circle cx="13.500" cy="13.500" r="4.200" fill="#6b98a5"/></g>`)}Color</button>
          <button>${icon(18, 18, svg`<path d="M4 6.500A7 7 0 1111 14.500" stroke-width="1.400"/><circle cx="5.500" cy="12.500" r="4.500" stroke-width="1.400"/><path d="M4 11l3 3" stroke-width="1.300"/>`)}Size</button>
          <button>${icon(17, 17, svg`<rect x="0.700" y="0.700" width="15.600" height="15.600" stroke-width="1.400"/><path d="M4.500 6V4.500h8V6M8.500 4.500v8M6.500 12.500h4" stroke-width="1.400"/>`)}Label</button>
          <button>${detailGlyph(18)}Detail</button>
          <button>${icon(18, 18, svg`<path d="M1 1.500h16v10H8.500L5 15.500v-4H1z" stroke-width="1.400"/>`)}Tooltip</button>
        </div>
        <div class="row">${detailGlyph(13)}<span class="pill">SUM(Sales)</span></div>
      </section>`;
  }
}

/* ---------- data guide ---------- */

@customElement("data-guide")
export class DataGuide extends LitElement {
  static styles = [base, css`
    :host { display: flex; flex-direction: column; width: 400px; flex: none; background: #fff; border: 1px solid #d4d4d4; border-width: 1px 0 0 1px; font-size: 15px; color: #333; min-height: 0; }
    h2 { height: 31px; line-height: 30px; flex: none; padding-left: 22px; background: #fafafa; border-bottom: 1px solid #d4d4d4; font-size: 17px; font-weight: 700; color: #000; }
    h3 { font-size: 19px; line-height: 24px; font-weight: 500; color: #4d4d4d; }
    .body { display: flex; flex: 1; min-height: 0; }
    .scroll { flex: 1; min-width: 0; overflow: hidden; }
    section { padding: 0 18px 0 20px; border-bottom: 1px solid #e6e6e6; }
    section.last { border: 0; }
    .line { display: flex; align-items: center; justify-content: space-between; height: 55px; color: #666; }
    .sheet { justify-content: flex-start; gap: 11px; height: 58px; }
    .sheet h3 { font-size: 18px; }
    .details { padding-top: 15px; padding-bottom: 28px; }
    .details label, .details h4 { display: block; margin: 0; font-size: 15px; font-weight: 400; line-height: 20px; }
    .details label { margin-top: 29px; }
    .details h4 { margin-top: 19px; }
    .details .act + h4 { margin-top: 22px; }
    .details textarea { display: block; width: 100%; height: 49px; margin: 3px 0 0; padding: 5px; font: inherit; font-size: 16px; line-height: 18px; border: 1px solid #666; resize: none; overflow: hidden; background: #fff; }
    textarea::placeholder { color: #666; opacity: 1; }
    .act { display: flex; align-items: center; gap: 11px; margin-top: 11px; font-size: 16px; line-height: 20px; color: #666; }
    .act .slot { width: 18px; display: flex; justify-content: center; }
    .viz { padding-top: 16px; padding-bottom: 30px; }
    .ds { display: flex; align-items: center; gap: 16px; margin: 28px 0 29px; padding-left: 8px; font-size: 18px; line-height: 24px; font-weight: 300; color: #444; }
    .used { padding-left: 39px; font-size: 16px; font-weight: 300; }
    .used li { display: flex; align-items: center; gap: 15px; height: 25px; color: #00b180; }
    .used li span { color: #444; }
    .used .geo { color: #3f8aa8; }
    .tip { display: flex; align-items: center; gap: 12px; padding: 9px 0 0 3px; font-size: 16px; line-height: 18px; color: #444; white-space: nowrap; }
    .track { display: flex; flex-direction: column; align-items: center; justify-content: space-between; width: 17px; flex: none; background: #f0f0f0; padding: 18px 0 6px; color: #444; }
    .thumb { width: 8px; height: 573px; background: #858585; margin-left: 6px; }
  `];
  render() {
    return html`
      <h2>Data Guide</h2>
      <div class="body">
        <div class="scroll">
          <section><div class="line sheet">${sheetGlyph()}<h3>Sheet 11</h3></div></section>
          <section class="details">
            <h3>Viz Details</h3>
            <label for="desc">Viz description</label>
            <textarea id="desc" placeholder="Enter a description to help your audience understand this viz."></textarea>
            <h4>Additional resources</h4>
            <button class="act"><span class="slot">${icon(15, 15, svg`<path d="M7.500 0v15M0 7.500h15" stroke-width="1.300"/>`)}</span>Add link</button>
            <h4>Accessibility</h4>
            <button class="act"><span class="slot">${icon(18, 18, svg`<path d="M14 1.500l2.800 2.500L5 15.500 1 17l1.200-4zM3 13l2.500 2.300M11.500 3.500L14.500 6.500" stroke-width="1.300"/>`)}</span>Edit alt text</button>
          </section>
          <section><div class="line"><h3>Applied Filters</h3></div></section>
          <section class="viz">
            <h3>Data in This Viz</h3>
            <div class="ds">${icon(12, 7, svg`<path d="M0.500 0.500L6 6l5.500-5.500" stroke="#444" stroke-width="1.500"/>`)}<span>SuperStore</span></div>
            <ul class="used">
              <li class="geo">${globe(14)}<span>State</span></li>
              <li>${hash(14)}<span>Profit</span></li>
              <li>${hash(14)}<span>Sales</span></li>
            </ul>
          </section>
          <section><div class="line"><h3>Data Summary</h3><button aria-label="Expand">${icon(15, 15, svg`<path d="M7.500 0v15M0 7.500h15"/>`)}</button></div></section>
          <section class="last">
            <div class="line"><h3>Detected Outliers (5)</h3><button aria-label="Collapse">${icon(15, 15, svg`<path d="M1.500 7.500h12" stroke-width="1.300"/>`)}</button></div>
            <div class="tip">${icon(13, 19, svg`<path d="M4 13.500C4 11 0.700 10 0.700 6.300a5.800 5.800 0 0111.600 0C12.300 10 9 11 9 13.500zM4 16h5M5 18.300h3"/>`)}<p>Tableau detected these marks as unusual<br />compared to other marks in the selected viz.</p></div>
          </section>
        </div>
        <div class="track"><div class="thumb"></div>${caret()}</div>
      </div>`;
  }
}

/* ---------- show me ---------- */

@customElement("show-me")
export class ShowMe extends LitElement {
  static styles = [base, css`
    :host { display: flex; flex-direction: column; align-items: flex-end; width: 255px; font-size: 16px; color: #222; filter: drop-shadow(2px 2px 1px rgba(0, 0, 0, 0.3)); }
    .tab { width: 130px; height: 46px; margin-bottom: -1px; position: relative; justify-content: flex-start; gap: 6px; font-size: 17px; padding: 0 0 7px 12px; background: #fafafa; border: 1px solid #d9d9d9; border-width: 1px 0 0 1px; color: #222; }
    .panel { width: 100%; background: #fafafa; border: 1px solid #d9d9d9; border-right: 0; padding: 17px 18px 17px 16px; }
    .grid { display: grid; grid-template-columns: repeat(3, 69px); gap: 5px 6px; }
    .grid button { width: 69px; height: 52px; background: #fff; border: 1px solid #dcdcdc; }
    .grid button.on { border: 2px solid #e0662f; }
    .grid svg { display: block; }
    .num { font: 5px Roboto, sans-serif; fill: #6a6a6a; }
    .help { padding: 22px 0 0 2px; }
    .help p { line-height: 20px; }
    .help b { font-weight: 700; color: #000; }
    .req { display: flex; align-items: center; gap: 4px; height: 24px; margin-top: 10px; }
    .req:nth-child(2) { margin-top: 8px; }
    .req .pill { padding: 0 16px 0 13px; }
    .geo { display: flex; gap: 8px; align-items: center; color: #666; margin-right: 2px; }
    .geo span { color: #222; }
    .help .note { margin-top: 14px; font-size: 16px; font-weight: 300; line-height: 19px; color: #666; }
  `];
  render() {
    return html`
      <button class="tab">${T.showMe}Show Me</button>
      <div class="panel">
        <div class="grid">
          ${THUMBS.map(([n, body]) => {
            const on = n === "Symbol map";
            const d = on ? 2 : 1;
            return html`<button class=${classMap({ on })} aria-label=${n}><svg width=${69 - 2 * d} height=${52 - 2 * d} viewBox="${d} ${d} ${69 - 2 * d} ${52 - 2 * d}">${body}</svg></button>`;
          })}
        </div>
        <div class="help">
          <p>For <b>symbol maps</b> try</p>
          <div class="req"><span class="geo"><span>1 geo</span>${globe(11)}</span><span class="pill blue">Dimension</span></div>
          <div class="req">0 or more<span class="pill blue">Dimensions</span></div>
          <div class="req">0 to 2<span class="pill">Measures</span></div>
          <p class="note">May use spatial measure in<br />place of geo dimension</p>
        </div>
      </div>`;
  }
}

/* ---------- taskbar ---------- */

const pic = (body: Svg) => html`<svg class="ic" width="30" height="30" viewBox="0 0 30 30" aria-hidden="true">${body}</svg>`;
const APPS: [string, Svg, boolean][] = [
  ["Task view", pic(svg`<rect x="1" y="8" width="22" height="20" rx="1" fill="#2b2b2b"/><rect x="8" y="1" width="21" height="19" rx="1" fill="#f4f4f4"/><rect x="8" y="8" width="15" height="12" fill="#bdbdbd"/>`), false],
  ["Copilot", pic(svg`<defs><linearGradient id="c1" x1="0" y1="0" x2="0" y2="1"><stop offset="0" stop-color="#1d8ff0"/><stop offset=".55" stop-color="#2cc0a0"/><stop offset="1" stop-color="#f5c518"/></linearGradient><linearGradient id="c2" x1="1" y1="0" x2="0" y2="1"><stop offset="0" stop-color="#9b5cf6"/><stop offset=".5" stop-color="#ee5fb0"/><stop offset="1" stop-color="#fb8a55"/></linearGradient></defs>
    <path d="M8 1h10c3 0 3 3 4 6h-4c-3 0-4 1-5 4l-2 8c-1 3-2 3-5 3H3c-4 0-3-4-2-8l3-9c1-3 2-4 4-4z" fill="url(#c1)"/><path d="M17 1h2c3 0 3 3 4 6h-6z" fill="#1a4fc4"/>
    <path d="M22 29H12c-3 0-3-3-4-6h4c3 0 4-1 5-4l2-8c1-3 2-3 5-3h3c4 0 3 4 2 8l-3 9c-1 3-2 4-4 4z" fill="url(#c2)"/>`), false],
  ["File Explorer", pic(svg`<path d="M1 3a1 1 0 011-1h9l3 4H1z" fill="#e09a00"/><rect x="0" y="5" width="30" height="23" rx="2" fill="#ffd04c"/><path d="M5 28v-5a2 2 0 012-2h16a2 2 0 012 2v5z" fill="#1278d0"/><path d="M9 25h12" stroke="#0b4f96" stroke-width="1.500"/>`), true],
  ["Microsoft Store", pic(svg`<path d="M9 6V1.500h12V6" fill="none" stroke="#3ec3f5" stroke-width="2"/><path d="M1 5h28v20a4 4 0 01-4 4H5a4 4 0 01-4-4z" fill="#17518d"/><path fill="#f25022" d="M9 12h5v5H9z"/><path fill="#7fba00" d="M15.500 12h5v5h-5z"/><path fill="#00a4ef" d="M9 18.500h5v5H9z"/><path fill="#ffb900" d="M15.500 18.500h5v5h-5z"/>`), false],
  ["Dropbox", pic(svg`<path d="M7.500 2L15 6.700 7.500 11.400 0 6.700zM22.500 2L30 6.700l-7.500 4.700L15 6.700zM7.500 11.400L15 16.100l-7.500 4.700L0 16.100zM22.500 11.400l7.500 4.700-7.500 4.700-7.500-4.700zM15 17.700l7.500 4.700L15 27.100l-7.500-4.700z"/>`), false],
  ["Diamond", pic(svg`<defs><linearGradient id="d1"><stop offset="0" stop-color="#ff3fb4"/><stop offset=".4" stop-color="#ff1020"/><stop offset=".65" stop-color="#ff1a10"/><stop offset="1" stop-color="#ffb000"/></linearGradient></defs><path d="M15 0l15 15-15 15L0 15z" fill="url(#d1)"/>`), false],
  ["Get Help", html`<svg class="ic" width="38" height="36" viewBox="0 0 38 36" aria-hidden="true"><circle cx="18" cy="20" r="15" fill="#fff"/><circle cx="18" cy="20" r="13.500" fill="#0c93d6"/><path d="M13.500 16.500a5 5 0 119 2.500c-1.500 2-4 2-4 5" fill="none" stroke="#fff" stroke-width="3.500"/><circle cx="18.500" cy="29" r="2.200" fill="#fff"/><circle cx="28" cy="10" r="10" fill="#ffc107"/></svg>`, false],
  ["Opera", pic(svg`<defs><linearGradient id="o1" x1="0" y1="0" x2="0" y2="1"><stop offset="0" stop-color="#ff2a3c"/><stop offset="1" stop-color="#b0000f"/></linearGradient></defs><ellipse cx="15" cy="15" rx="14.500" ry="15" fill="url(#o1)"/><path d="M15 0c8 0 14.500 6.700 14.500 15S23 30 15 30c8-3 8-27 0-30z" fill="#c4121f" opacity=".6"/><ellipse cx="15" cy="15" rx="6.500" ry="11" fill="#d7dce9"/>`), false],
  ["Chrome", pic(svg`<circle cx="15" cy="15" r="15" fill="#34a853"/><path d="M15 8h13.300A15 15 0 0115 30l6.500-11.300z" fill="#fbbc05"/><path d="M2 7.500a15 15 0 0126 0H15L8.500 18.700z" fill="#ea4335"/><circle cx="15" cy="15" r="7.200" fill="#fff"/><circle cx="15" cy="15" r="5.700" fill="#4285f4"/>`), true],
  ["Brave", pic(svg`<path d="M8 0.500h14l2.500 3h3l-0.500 5 0.500 3-3 11-3.500 4-6 3.500-6-3.500-3.500-4-3-11 0.500-3-0.500-5h3z" fill="#fb4f1f"/><path d="M15 6l4-1.500 4.500 5-1.500 4 1 3-4 3-1 4-3 2.500-3-2.500-1-4-4-3 1-3-1.500-4L11 4.500z" fill="#fff"/><path d="M11 9l-1 3 3 1.500-1 4 3 1.500 3-1.500-1-4 3-1.500-1-3-2 1h-4z" fill="#fb4f1f"/><path d="M13.500 8h3l0.500 8-2 2-2-2zM11 20l4-1.500 4 1.500-4 3z" fill="#fff" stroke="#fb4f1f" stroke-width=".6"/>`), true],
  ["Edge", pic(svg`<defs><linearGradient id="e1"><stop offset="0" stop-color="#1aa0e8"/><stop offset=".6" stop-color="#36c5c8"/><stop offset="1" stop-color="#6fe05a"/></linearGradient></defs><circle cx="15" cy="15" r="15" fill="#1173c9"/><path d="M30 15c-1 4-4 6-8 6-3 0-5-1-5-2 1-1 2-2 2-4 0 6 7 8 9 7-3 5-8 8-13 8z" fill="#d6dcea"/><path d="M0 14C1 5 8 0 15 0c9 0 15 6 15 12 0 5-4 8-8 8-3 0-5-1-5-2 1-1 2-2 2-4 0-4-4-6-8-6-5 0-10 2-11 6z" fill="url(#e1)"/><path d="M10 17c0-4 2-6 5-6-5-3-12 0-12 8 1 7 7 11 13 11 5 0 9-2 12-6-9 4-18 0-18-7z" fill="#0c59a4"/>`), false],
  ["WhatsApp", pic(svg`<path d="M2 29l2-7a13 13 0 114.500 4.500z" fill="none" stroke="#178a54" stroke-width="2.800"/><path d="M10 8c1-1 2-1 2.500 0l1 2.500c.3.800-1.300 1.800-1 2.500 1 2 2.500 3.500 4.500 4.500.8.300 1.800-1.500 2.500-1.200l2.500 1.200c.800.500.500 2-.500 3-1.500 1.500-4 1.500-7-.500S9 15 8.500 12.500C8.200 10.500 9 9 10 8z" fill="#178a54"/>`), true],
];

@customElement("task-bar")
export class TaskBar extends LitElement {
  static styles = [base, css`
    :host { display: grid; grid-template-columns: 1fr auto 1fr; align-items: center; height: 60px; flex: none; border-top: 1px solid #a9b0c0; background: linear-gradient(90deg, #d9ddea 0%, #d3dfec 30%, #d6dcea 48%, #d2deec 60%, #d8dbe9 75%, #d3dfed 100%); font: 15px/20px "Open Sans", sans-serif; color: #1b1b1b; }
    .weather { display: flex; gap: 6px; padding: 0 0 2px 24px; align-items: center; text-align: left; justify-self: start; }
    .weather small { display: block; font-size: 14px; color: #555; }
    .weather span span { display: block; font-size: 14px; }
    .center { display: flex; align-items: center; margin-right: 5px; }
    .center .start { width: 57px; height: 48px; }
    .search { display: flex; align-items: center; gap: 12px; width: 274px; height: 38px; margin: 0 4px 0 2px; padding: 0 4px 0 14px; border: 1px solid #c3cad8; border-radius: 19px; background: #f2f5fb; overflow: hidden; }
    .search input { width: 150px; border: 0; outline: 0; background: none; font: inherit; font-size: 16px; padding: 0; }
    .search input::placeholder { color: #5c5c5c; opacity: 1; }
    .app { display: grid; grid-template-rows: 1fr 4px; justify-items: center; width: 55px; height: 48px; border-radius: 5px; }
    .app i { width: 7px; height: 4px; border-radius: 2px; }
    .app.run i { background: #7d838f; }
    .app.active { width: 48px; background: #eff3fa; margin-left: 3px; box-shadow: 2px 0 0 #e3e8f2; }
    .app.active i { width: 20px; background: #0f78d4; }
    .tile { display: flex; background: #fff; padding: 2px; border: 1px solid #ddd; }
    .tray { display: flex; align-items: center; justify-content: flex-end; padding: 0 24px 2px 0; }
    .tray .lang { width: 40px; margin: 0 17px 0 17px; text-align: center; font-size: 15px; }
    .tray .status { gap: 10px; margin-right: 17px; }
    .clock { text-align: right; font-size: 15px; }
    .tray .up { margin-right: 23px; }
  `];
  render() {
    return html`
      <button class="weather">
        <svg class="ic" width="34" height="40" viewBox="0 0 34 40" aria-hidden="true"><path d="M2 19c7 0 11-5 10-12 5 2 7 8 5 13-3 4-11 5-15-1z" fill="#f5a623"/><path d="M8 38a7 7 0 010-13 8.500 8.500 0 0116-2 7.500 7.500 0 012 15z" fill="#9dbcf3"/><path d="M8 38a7 7 0 01-6-5c8 2 20 2 29-1a7 7 0 01-5 6z" fill="#6f97e6"/><circle cx="24" cy="11" r="10" fill="#c42b1c"/><text x="24" y="16" text-anchor="middle" fill="#fff" font-size="14" font-family="Open Sans">1</text></svg>
        <span><span>26°C</span><small>Mostly cloudy</small></span>
      </button>
      <div class="center">
        <button class="start" aria-label="Start">${pic(svg`<defs><linearGradient id="w" x1="0" y1="0" x2="1" y2="1"><stop offset="0" stop-color="#4cc9fb"/><stop offset="1" stop-color="#0067c8"/></linearGradient></defs><path d="M0 0h14.300v14.300H0zM15.700 0H30v14.300H15.700zM0 15.700h14.300V30H0zM15.700 15.700H30V30H15.700z" fill="url(#w)"/>`)}</button>
        <label class="search">
          ${icon(19, 19, svg`<circle cx="8.500" cy="8" r="6.500" stroke-width="2.200"/><path d="M13 13l5 5.500" stroke-width="2.400"/>`)}
          <input type="text" placeholder="Search" aria-label="Search Windows" />
          <svg class="ic" width="64" height="34" viewBox="0 0 64 34" aria-hidden="true"><path d="M22 32c4-8 10-14 20-16h14c6 2 8 8 6 12-2 3-4 4-8 5z" fill="#f5be8b"/><path d="M46 32l2-14h12c3 4 3 8-1 13z" fill="#c98a52"/><path d="M1 29C8 16 20 13 32 18c4 4 4 9-2 15H8c-4 0-6-1-7-4z" fill="#63b6ea"/><path d="M12 28c3-6 9-10 17-9-1 6-5 9-17 9z" fill="#a5dcf8"/><path d="M47 8c-2 8-1 14-2 17h3c1-6 0-11 1-17z" fill="#8a5a2b"/><path d="M36 16c1-7 5-10 10-8-2-4 4-7 7-4 5-3 10 1 10 10-3-4-5-5-7-4 2 3 2 6 0 8-1-5-3-7-5-8-1 4-3 6-5 7 0-3 0-5-1-6-3 1-6 2-9 5z" fill="#57a639"/><path d="M37 27l10-1 4-4M38 31l2-3M47 31l-2-4" stroke="#e83e7a" stroke-width="2.200" fill="none"/></svg>
        </label>
        ${APPS.map(([n, g, run]) => html`<button class=${classMap({ app: true, run })} aria-label=${n}>${g}<i></i></button>`)}
        <button class="app active" aria-label="Tableau"><span class="tile">${tableauMark(25, true)}</span><i></i></button>
      </div>
      <div class="tray">
        <button class="up" aria-label="Hidden icons">${icon(14, 9, svg`<path d="M1 8l6-6 6 6" stroke-width="1.800"/>`)}</button>
        <button aria-label="Updates">${icon(22, 22, svg`<path d="M2 9a9 9 0 0117-3M19 1v5h-5M8 19.500A9 9 0 012 13.500M1.500 19v-5h5" stroke-width="1.600"/><circle cx="16" cy="16" r="5" fill="#f99b0c" stroke="none"/>`)}</button>
        <button class="lang">ENG<br />IN</button>
        <button class="status" aria-label="Network, sound, battery">
          ${icon(20, 16, svg`<path d="M1 6a13 13 0 0118 0M4 9a8.500 8.500 0 0112 0M6.800 11.800a4.500 4.500 0 016.400 0" stroke-width="1.500"/><circle cx="10" cy="14" r="1.600" fill="currentColor" stroke="none"/>`)}
          ${icon(19, 16, svg`<path d="M1 5.500h3L8.500 1.500v13L4 10.500H1zM11 5.500a4 4 0 010 5M13.500 3.500a7 7 0 010 9" stroke-width="1.300"/><path d="M16 1.500a10 10 0 010 13" stroke="#9aa0ac"/>`)}
          ${icon(20, 13, svg`<rect x="0.800" y="0.800" width="16" height="11.400" rx="2.500" stroke-width="1.500"/><rect x="3" y="3" width="4.500" height="7" fill="currentColor" stroke="none"/><path d="M18.700 4v5" stroke-width="2"/>`)}
        </button>
        <button class="clock">06:20<br />19 December</button>
      </div>`;
  }
}

/* ---------- shelves ---------- */

@customElement("shelf-row")
export class ShelfRow extends LitElement {
  @property() label = "";
  static styles = [base, css`
    :host { display: flex; align-items: center; height: 32px; flex: none; border: 1px solid #d4d4d4; background: #fafafa; font-size: 15px; color: #4d4d4d; }
    .name { display: flex; align-items: center; gap: 8px; width: 159px; height: 100%; padding-left: 8px; border-right: 1px solid #d4d4d4; }
    .pill { width: 178px; margin-left: 2px; gap: 7px; }
  `];
  render() {
    const cols = this.label === "Columns";
    return html`
      <div class="name">${cols
        ? icon(11, 12, svg`<path d="M1.500 0v2M5.500 0v2M9.500 0v2M1.500 4v8M5.500 4v8M9.500 4v8" stroke-width="1.700"/>`)
        : icon(12, 10, svg`<path d="M0 1h2M0 5h2M0 9h2M4 1h8M4 5h8M4 9h8" stroke-width="1.700"/>`)}${this.label}</div>
      <span class=${classMap({ pill: true, blue: !cols })}>${cols ? "SUM(Profit)" : html`${plusBox()}State`}</span>`;
  }
}

/* ---------- application ---------- */

@customElement("app-root")
export class AppRoot extends LitElement {
  static styles = [base, css`
    :host { position: relative; display: flex; flex-direction: column; height: 100vh; overflow: hidden; background: #f5f5f5; font-family: Roboto, "Liberation Sans", sans-serif; color: #333; }
    .title { display: flex; align-items: center; height: 29px; flex: none; padding: 0 3px; gap: 5px; background: linear-gradient(90deg, #f9efee, #f3f0f6 35%, #eff2f8 60%, #f3f0f7 85%, #f5f2f8); font: 14px "Open Sans", sans-serif; color: #111; }
    .title .logo { display: flex; padding: 1px; background: #f3f6f8; border: 1px solid #ccc; }
    .title .name { flex: 1; }
    .wins { display: flex; }
    .win { width: 59px; height: 29px; }
    .menu { display: flex; height: 25px; flex: none; background: #fff; font: 14px/25px "Open Sans", sans-serif; color: #000; }
    .menu button { padding: 0 8px; }
    .bar { display: flex; align-items: center; height: 51px; flex: none; border-top: 1px solid #ececec; color: #666; }
    .bar .group { display: flex; align-items: center; height: 35px; border-right: 1px solid #d4d4d4; padding: 0 6px; }
    .bar .group.first { width: 57px; justify-content: center; padding: 0; }
    .bar .group.sort { gap: 2px; }
    .bar .group.sort, .bar .group.show { padding-right: 9px; }
    .bar .group.end { border: 0; flex: 1; padding-left: 8px; }
    .bar .b { width: 38px; height: 35px; }
    .bar .d { width: 12px; height: 35px; }
    .bar .d .ic { width: 7px; }
    .bar .dim { color: #aaa; }
    .bar .guide { margin-right: 146px; }
    .zoom { display: grid; grid-template-columns: 1fr 22px; width: 127px; height: 28px; margin: 0 11px 0 10px; border: 1px solid #c4c4c4; border-radius: 2px; align-items: center; }
    .zoom select { grid-area: 1 / 1 / 2 / 3; appearance: none; height: 26px; border: 0; margin: 0; padding: 0 0 0 8px; background: none; font: inherit; font-size: 18px; font-weight: 300; color: #222; }
    .zoom span { grid-area: 1 / 2; display: flex; align-items: center; justify-content: center; height: 26px; border-left: 1px solid #ddd; pointer-events: none; }
    .main { display: flex; flex: 1; min-height: 0; }
    .work { display: flex; flex-direction: column; flex: 1; min-width: 0; gap: 6px; margin-right: 6px; }
    .viz { flex: 1; min-height: 0; margin-bottom: 6px; padding: 13px 6px 0 0; background: #fff; border: 1px solid #d4d4d4; }
    .viz h1 { padding-left: 11px; font-size: 26px; line-height: 32px; height: 42px; color: #333; }
    .overlay { position: absolute; top: 60px; right: 4px; }
    .sheets { display: flex; height: 37px; flex: none; background: #e6e6e6; border-top: 1px solid #c8c8c8; font-size: 16px; font-weight: 300; color: #333; }
    .sheets button { width: 71px; border-right: 1px solid #c8c8c8; gap: 5px; }
    .sheets .source { width: 163px; justify-content: flex-start; padding-left: 10px; gap: 6px; }
    .sheets .mid { width: 80px; }
    .sheets .on { background: #fafafa; font-weight: 700; font-size: 15px; color: #444; }
    .sheets .dash { width: 125px; }
    .sheets .add { width: 33px; color: #555; }
    .status { display: flex; height: 26px; flex: none; background: #ebebeb; border-top: 1px solid #d0d0d0; font-size: 14px; line-height: 25px; color: #222; padding-left: 4px; }
    .status .facts { display: flex; gap: 18px; flex: 1; }
    .cell { display: flex; align-items: center; border-left: 1px solid #d0d0d0; color: #bcbcbc; }
    .cell.a { width: 157px; } .cell.b { width: 32px; } .cell.c { width: 57px; }
    .cell.nav { width: 71px; justify-content: space-evenly; }
    .cell.views { width: 70px; justify-content: space-between; padding: 0 6px 0 8px; }
  `];

  private drop(dim = false) {
    return html`<button class=${classMap({ d: true, dim })} aria-label="More">${caret()}</button>`;
  }
  private tool(label: string, g: Svg, dim = false) {
    return html`<button class=${classMap({ b: true, dim })} aria-label=${label}>${g}</button>`;
  }

  render() {
    const small = Array.from({ length: 9 }, (_, i) => i + 1);
    const wide = [10, 11, 12, 13, 14];
    return html`
      <header class="title">
        <div class="logo">${tableauMark(16, true)}</div><span class="name">Tableau - Sales_Data_Analysis</span>
        <div class="wins">
          <button class="win" aria-label="Minimize">${icon(12, 12, svg`<path d="M0 6h12" stroke-width="1.200"/>`)}</button>
          <button class="win" aria-label="Restore">${icon(12, 12, svg`<rect x="0.700" y="2.700" width="8.500" height="8.500" rx="1.500" stroke-width="1.300"/><path d="M3 0.700h6.500a2 2 0 012 2V9" stroke-width="1.300"/>`)}</button>
          <button class="win" aria-label="Close">${icon(12, 12, svg`<path d="M0.500 0.500l11 11M11.500 0.500l-11 11" stroke-width="1.300"/>`)}</button>
        </div>
      </header>
      <nav class="menu">${["File", "Data", "Worksheet", "Dashboard", "Story", "Analysis", "Map", "Format", "Server", "Window", "Help"].map((m) => html`<button>${m}</button>`)}</nav>
      <div class="bar">
        <div class="group first">${tableauMark(18)}</div>
        <div class="group">
          ${this.tool("Undo", T.back, true)}${this.tool("Redo", T.fwd, true)}${this.tool("Replay", T.redo, true)}${this.drop(true)}
          ${this.tool("Save", T.save)}${this.tool("New data source", T.dbAdd)}${this.tool("Pause updates", T.dbPause)}${this.drop()}${this.tool("Run update", T.refresh, true)}${this.drop(true)}
        </div>
        <div class="group">${this.tool("New worksheet", T.newSheet)}${this.drop()}${this.tool("Duplicate", T.dup)}${this.tool("Clear", T.clear)}${this.drop()}</div>
        <div class="group sort">${this.tool("Swap", T.swap)}${this.tool("Sort ascending", T.asc)}${this.tool("Sort descending", T.desc)}</div>
        <div class="group">
          ${this.tool("Highlight", T.pen)}${this.drop()}${this.tool("Group", T.clip, true)}${this.drop(true)}${this.tool("Labels", T.text)}${this.tool("Pin", T.pin)}
          <div class="zoom"><select aria-label="Fit"><option>Standard</option></select><span>${caret()}</span></div>
        </div>
        <div class="group show">${this.tool("Cards", T.cards)}${this.drop()}${this.tool("Present", T.present)}</div>
        <div class="group end">${this.tool("Share", T.share)}</div>
        <button class="guide" aria-label="Data Guide">${T.sign}</button>
      </div>
      <div class="main">
        <data-pane></data-pane>
        <cards-pane></cards-pane>
        <main class="work">
          <shelf-row label="Columns"></shelf-row>
          <shelf-row label="Rows"></shelf-row>
          <div class="viz"><h1>Sales Over Shipping Time</h1><profit-chart></profit-chart></div>
        </main>
        <data-guide></data-guide>
      </div>
      <nav class="sheets">
        <button class="source">${icon(9, 11, svg`<path d="M1 2v7c0 2 7 2 7 0V2"/><ellipse cx="4.500" cy="2" rx="3.500" ry="1.500"/>`)}Data Source</button>
        ${small.map((n) => html`<button>Sheet ${n}</button>`)}
        ${wide.map((n) => html`<button class=${classMap({ mid: true, on: n === 11 })}>Sheet ${n}</button>`)}
        ${[1, 2].map((n) => html`<button class="dash">${dashGlyph()}Dashboard ${n}</button>`)}
        <button class="add" aria-label="New Worksheet">${icon(16, 15, svg`<path d="M8 11.500H0.500v-11h11V7M3.500 9V6M6 9V3M8.500 9V4.500"/><path d="M11.500 7.500v7M8 11h7" stroke-width="2"/>`)}</button>
        <button class="add" aria-label="New Dashboard">${icon(16, 15, svg`<path d="M7 10.500H0.500v-10h10.500V7M5.700 0.500v10M0.500 5.500H11"/><path d="M11.500 7.500v7M8 11h7" stroke-width="2"/>`)}</button>
        <button class="add" aria-label="New Story">${icon(16, 15, svg`<path d="M6 2.500L0.500 0.500v9L6 11.500zM6 2.500L11.500 0.500V7M6 11.500"/><path d="M11.500 7.500v7M8 11h7" stroke-width="2"/>`)}</button>
      </nav>
      <footer class="status">
        <div class="facts"><span>49 marks</span><span>49 rows by 1 column</span><span>SUM(Profit): 175,262</span></div>
        <div class="cell a"></div><div class="cell b"></div><div class="cell b"></div><div class="cell c"></div>
        <div class="cell nav">
          ${icon(7, 8, svg`<path d="M1 0v8" /><path d="M7 0v8L2.500 4z" fill="currentColor" stroke="none"/>`)}
          ${icon(5, 8, svg`<path d="M5 0v8L0 4z" fill="currentColor" stroke="none"/>`)}
          ${icon(5, 8, svg`<path d="M0 0v8l5-4z" fill="currentColor" stroke="none"/>`)}
          ${icon(7, 8, svg`<path d="M6 0v8"/><path d="M0 0v8l4.500-4z" fill="currentColor" stroke="none"/>`)}
        </div>
        <div class="cell views">
          ${icon(11, 11, svg`<path d="M0 1.500h11M0 5.500h11M0 9.500h11" stroke-width="3" stroke-dasharray="3 1"/>`)}
          ${icon(11, 11, svg`<path d="M0 3.500h11" stroke-width="7"/><path d="M0 9.500h11" stroke-width="3" stroke-dasharray="3 1"/>`)}
          ${icon(11, 11, svg`<path d="M0 0h11v11H0z" fill="#666" stroke="none"/>`)}
        </div>
      </footer>
      <task-bar></task-bar>
      <show-me class="overlay"></show-me>`;
  }
}
